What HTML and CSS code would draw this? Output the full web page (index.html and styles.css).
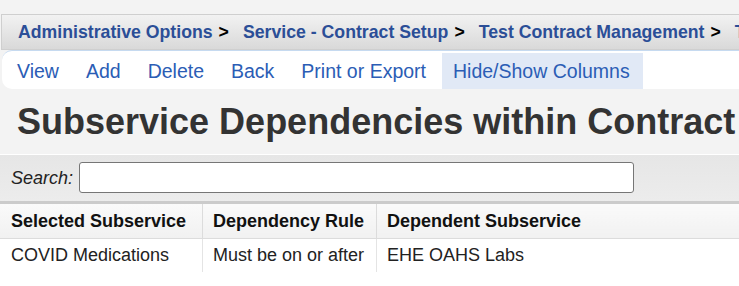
FILE: index.html
```html
<!DOCTYPE html>
<html lang="en">
<head>
    <meta charset="UTF-8">
    <title>Subservice Dependencies within Contract</title>
    <link rel="stylesheet" href="styles.css">
</head>
<body>
    <div class="page">
        <nav class="breadcrumb">
            <a href="#">Administrative Options</a><span class="sep">&gt;</span>
            <a href="#">Service - Contract Setup</a><span class="sep">&gt;</span>
            <a href="#">Test Contract Management</a><span class="sep">&gt;</span>
            <a href="#">Test Contract</a>
        </nav>

        <ul class="menu">
            <li><a href="#">View</a></li>
            <li><a href="#">Add</a></li>
            <li><a href="#">Delete</a></li>
            <li><a href="#">Back</a></li>
            <li><a href="#">Print or Export</a></li>
            <li class="active"><a href="#">Hide/Show Columns</a></li>
        </ul>

        <h1 class="page-title">Subservice Dependencies within Contract</h1>

        <div class="search-bar">
            <label for="search">Search:</label>
            <input type="text" id="search">
        </div>

        <table class="grid">
            <thead>
                <tr>
                    <th class="col-selected">Selected Subservice</th>
                    <th class="col-rule">Dependency Rule</th>
                    <th>Dependent Subservice</th>
                </tr>
            </thead>
            <tbody>
                <tr>
                    <td>COVID Medications</td>
                    <td>Must be on or after</td>
                    <td>EHE OAHS Labs</td>
                </tr>
            </tbody>
        </table>
    </div>
</body>
</html>
```

FILE: styles.css
```css
:root {
    --link-color: #2b5db5;
    --crumb-color: #2b4e97;
    --text-color: #333;
    --page-bg: #f3f3f3;
    --line: #dcdcdc;
}

html, body {
    margin: 0;
    padding: 0;
    overflow: hidden;
}

body {
    font-family: "Liberation Sans", Arial, sans-serif;
    background: #fff;
    color: var(--text-color);
    width: 739px;
    height: 286px;
}

.page {
    background: var(--page-bg);
    padding-top: 14px;
    width: 1000px;
}

.breadcrumb {
    box-sizing: border-box;
    margin-left: 1px;
    height: 36px;
    display: flex;
    align-items: center;
    padding-left: 16px;
    border: 1px solid #cfcfcf;
    background: linear-gradient(#f2f2f2, #d9d9d9);
    font-size: 17.7px;
    font-weight: bold;
    white-space: nowrap;
}

.breadcrumb a {
    color: var(--crumb-color);
    text-decoration: none;
}

.breadcrumb .sep {
    color: #000;
    margin: 0 14px 0 6px;
}

.menu {
    box-sizing: border-box;
    list-style: none;
    margin: 0 0 0 2px;
    padding: 2px 0 0 4px;
    display: flex;
    height: 39px;
    background: #fff;
    border-top: 1px solid #c6daf0;
    border-radius: 10px 0 0 10px;
}

.menu li {
    display: flex;
    align-items: center;
    padding: 0 13px 0 11px;
    margin-right: 3px;
}

.menu li.active {
    background: #e1e9f6;
}

.menu a {
    color: var(--link-color);
    text-decoration: none;
    font-size: 19.5px;
}

.page-title {
    margin: 0;
    height: 65px;
    padding-left: 17px;
    display: flex;
    align-items: center;
    font-size: 36px;
    font-weight: bold;
    color: #333;
    white-space: nowrap;
}

.search-bar {
    display: flex;
    align-items: center;
    gap: 6px;
    height: 46px;
    padding-left: 11px;
    border-top: 1px solid #fff;
    border-bottom: 3px solid #cbcbcb;
    background: linear-gradient(#e6e6e6, #ececec);
}

.search-bar label {
    font-style: italic;
    font-size: 18px;
    color: #222;
}

.search-bar input {
    width: 549px;
    height: 27px;
    box-sizing: content-box;
    padding: 1px 2px;
    margin-top: -1px;
    border: 1px solid #767676;
    border-radius: 3px;
    background: #fff;
}

.grid {
    border-collapse: collapse;
    background: #fff;
    width: 1000px;
    font-size: 18px;
}

.grid th {
    text-align: left;
    font-weight: bold;
    color: #111;
    height: 34px;
    padding: 0 10px;
    background: linear-gradient(#fafafa, #f1f1f1);
    border-bottom: 1px solid var(--line);
    border-right: 1px solid var(--line);
}

.grid th:first-child,
.grid td:first-child {
    padding-left: 11px;
}

.grid td {
    height: 33px;
    padding: 0 10px;
    border-right: 1px solid #e4e4e4;
    color: #222;
}

.grid .col-selected {
    width: 181px;
}

.grid .col-rule {
    width: 153px;
}
```
